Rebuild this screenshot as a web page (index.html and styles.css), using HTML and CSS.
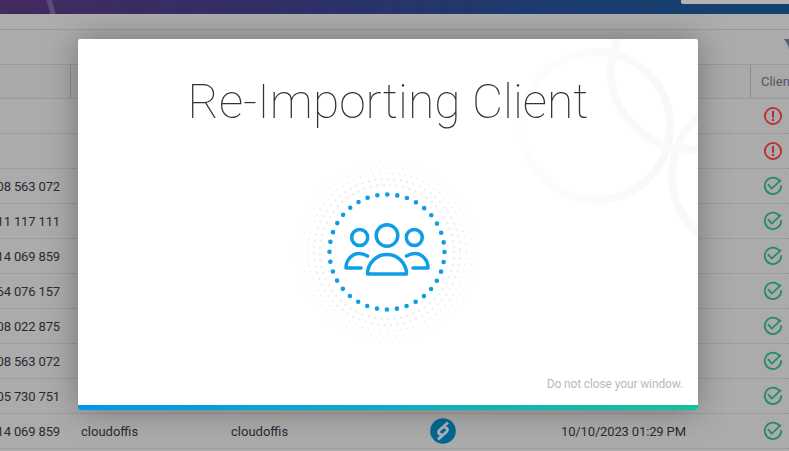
FILE: index.html
```html
<!DOCTYPE html>
<html lang="en">
<head>
<meta charset="utf-8">
<title>Re-Importing Client</title>
<link rel="stylesheet" href="styles.css">
</head>
<body>
<svg class="defs" width="0" height="0" aria-hidden="true">
  <defs>
    <symbol id="warn" viewBox="0 0 20 20">
      <circle cx="10" cy="10" r="8.100" fill="none" stroke="currentColor" stroke-width="1.800"/>
      <path d="M10 5.600v5.400" fill="none" stroke="currentColor" stroke-width="2" stroke-linecap="round"/>
      <circle cx="10" cy="14" r="1.200" fill="currentColor"/>
    </symbol>
    <symbol id="ok" viewBox="0 0 20 20">
      <path d="M16.600 5A8.200 8.200 0 1 0 18.200 10" fill="none" stroke="currentColor" stroke-width="1.800" stroke-linecap="round"/>
      <path d="M5.400 8.600l3.300 4 8.800-8.200" fill="none" stroke="currentColor" stroke-width="1.800" stroke-linecap="round" stroke-linejoin="round"/>
    </symbol>
    <symbol id="logo" viewBox="0 0 26 26">
      <circle cx="13" cy="13" r="12.800" fill="#05678f"/>
      <path d="M18 4.500 9.200 12.400C7.500 14.500 9 17 12 16.200" fill="none" stroke="#aab4b8" stroke-width="2.800"/>
      <path d="M8 21.500 16.800 13.600C18.500 11.500 17 9 14 9.800" fill="none" stroke="#aab4b8" stroke-width="2.800"/>
    </symbol>
    <linearGradient id="fade" x1="0" x2="1" y1="0" y2="0">
      <stop offset="0" stop-color="#fdfdfe"/>
      <stop offset="1" stop-color="#f7f8fb"/>
    </linearGradient>
  </defs>
</svg>

<header class="topbar">
  <span class="swoosh"></span>
  <span class="search"></span>
</header>
<div class="toolbar"></div>
<div class="filterbar">
  <svg class="filter" viewBox="0 0 5 10" width="5" height="10" aria-hidden="true"><path d="M0 0h5V6.500L4 10V6z" fill="#56606c"/></svg>
</div>

<main class="table">
  <div class="row head">
    <div class="cell phone"></div>
    <div class="cell wide"></div>
    <div class="cell status-h">Client</div>
  </div>
  <div class="row">
    <div class="cell phone"></div><div class="cell name"></div><div class="cell name"></div><div class="cell brand"></div><div class="cell date"></div>
    <div class="cell status"><svg class="icon red"><use href="#warn"/></svg></div>
  </div>
  <div class="row">
    <div class="cell phone"></div><div class="cell name"></div><div class="cell name"></div><div class="cell brand"></div><div class="cell date"></div>
    <div class="cell status"><svg class="icon red"><use href="#warn"/></svg></div>
  </div>
  <div class="row">
    <div class="cell phone">08 563 072</div><div class="cell name"></div><div class="cell name"></div><div class="cell brand"></div><div class="cell date"></div>
    <div class="cell status"><svg class="icon green"><use href="#ok"/></svg></div>
  </div>
  <div class="row">
    <div class="cell phone">11 117 111</div><div class="cell name"></div><div class="cell name"></div><div class="cell brand"></div><div class="cell date"></div>
    <div class="cell status"><svg class="icon green"><use href="#ok"/></svg></div>
  </div>
  <div class="row">
    <div class="cell phone">14 069 859</div><div class="cell name"></div><div class="cell name"></div><div class="cell brand"></div><div class="cell date"></div>
    <div class="cell status"><svg class="icon green"><use href="#ok"/></svg></div>
  </div>
  <div class="row">
    <div class="cell phone">64 076 157</div><div class="cell name"></div><div class="cell name"></div><div class="cell brand"></div><div class="cell date"></div>
    <div class="cell status"><svg class="icon green"><use href="#ok"/></svg></div>
  </div>
  <div class="row">
    <div class="cell phone">08 022 875</div><div class="cell name"></div><div class="cell name"></div><div class="cell brand"></div><div class="cell date"></div>
    <div class="cell status"><svg class="icon green"><use href="#ok"/></svg></div>
  </div>
  <div class="row">
    <div class="cell phone">08 563 072</div><div class="cell name"></div><div class="cell name"></div><div class="cell brand"></div><div class="cell date"></div>
    <div class="cell status"><svg class="icon green"><use href="#ok"/></svg></div>
  </div>
  <div class="row">
    <div class="cell phone">05 730 751</div><div class="cell name"></div><div class="cell name"></div><div class="cell brand"><svg class="logo"><use href="#logo"/></svg></div><div class="cell date"></div>
    <div class="cell status"><svg class="icon green"><use href="#ok"/></svg></div>
  </div>
  <div class="row">
    <div class="cell phone">14 069 859</div><div class="cell name">cloudoffis</div><div class="cell name">cloudoffis</div><div class="cell brand"><svg class="logo"><use href="#logo"/></svg></div><div class="cell date">10/10/2023 01:29 PM</div>
    <div class="cell status"><svg class="icon green"><use href="#ok"/></svg></div>
  </div>
</main>

<section class="modal">
  <svg class="rings" viewBox="0 0 620 371" aria-hidden="true">
    <g fill="none" stroke-width="8">
      <circle cx="518" cy="87" r="74" stroke="url(#fade)"/>
      <circle cx="612" cy="31" r="79" stroke="#f8f9fb"/>
      <circle cx="672" cy="136" r="78" stroke="#f8f9fb"/>
    </g>
  </svg>
  <h1 class="title">Re-Importing Client</h1>
  <div class="progress">
    <svg class="spinner" viewBox="0 0 200 200" width="200" height="200" aria-hidden="true">
      <g class="halftone" fill="none" stroke-linecap="round">
        <circle cx="100" cy="100" r="91" stroke-width="1" stroke-dasharray="0 6.500"/>
        <circle cx="100" cy="100" r="85" stroke-width="1.500" stroke-dasharray="0 6.500"/>
        <circle cx="100" cy="100" r="79" stroke-width="2" stroke-dasharray="0 6.500"/>
        <circle cx="100" cy="100" r="73" stroke-width="2.600" stroke-dasharray="0 6.500"/>
        <circle cx="100" cy="100" r="67" stroke-width="2.800" stroke-dasharray="0 6.500"/>
      </g>
      <circle class="dots" cx="100" cy="100" r="57.500" stroke-dasharray="0 10.030"/>
      <g class="people">
        <circle cx="100" cy="83.500" r="10.800"/>
        <circle cx="72.700" cy="85.500" r="8"/>
        <circle cx="127.300" cy="85.500" r="8"/>
        <path d="M80.500 122a19.500 19.500 0 0 1 39 0z"/>
        <path d="M74 116H59C59 107 66 101.500 72 101.500C75 101.500 78 102.500 80.500 104"/>
        <path d="M126 116H141C141 107 134 101.500 128 101.500C125 101.500 122 102.500 119.500 104"/>
      </g>
    </svg>
  </div>
  <p class="note">Do not close your window.</p>
  <div class="bar"></div>
</section>
</body>
</html>
```
FILE: styles.css
```css
* { box-sizing: border-box; }

html, body {
  margin: 0;
  height: 100%;
  overflow: hidden;
}

body {
  position: relative;
  background: #ababab;
  font-family: Roboto, "Liberation Sans", sans-serif;
  font-size: 13px;
  color: #2a2a32;
}

.defs { position: absolute; }

.topbar {
  position: relative;
  height: 14px;
  background: linear-gradient(90deg, #432a60 0%, #323068 35%, #1e3a6e 65%, #12436f 100%);
  overflow: hidden;
}

.swoosh {
  position: absolute;
  left: 46px;
  top: -2px;
  width: 10px;
  height: 18px;
  background: #5d4b7c;
  clip-path: polygon(0 0, 55% 0, 100% 100%, 50% 100%);
}

.search {
  position: absolute;
  right: 0;
  top: 0;
  width: 108px;
  height: 4px;
  background: #b4b4b4;
  border-radius: 0 0 0 2px;
}

.toolbar {
  height: 16px;
  border-bottom: 1px solid #999;
  background: #adadad;
}

.filterbar {
  height: 35px;
  display: flex;
  justify-content: flex-end;
  padding-top: 9px;
  border-bottom: 1px solid #999;
}

.table { display: flex; flex-direction: column; }

.row {
  display: grid;
  grid-template-columns: 71px 150px 149px 146px 234px 1fr;
  height: 35px;
  border-bottom: 1px dotted #8f8f8f;
}

.head {
  grid-template-columns: 71px 680px 1fr;
  height: 34px;
  border-bottom: 1px solid #999;
  background: #a9a9a9;
}

.cell {
  display: flex;
  align-items: center;
  min-width: 0;
  white-space: nowrap;
}

.head .phone, .head .wide {
  border-right: 1px solid #8a8a8a;
}

.status-h {
  padding-left: 10px;
  color: #4f5763;
}

.phone {
  justify-content: flex-end;
  padding-right: 11px;
  letter-spacing: -.14px;
}

.name { padding-left: 10px; }

.brand { justify-content: center; }

.date {
  padding-left: 45px;
  letter-spacing: -.14px;
}

.status { justify-content: center; padding-left: 6px; }

.icon { width: 20px; height: 20px; flex: none; }
.red { color: #bd2c2c; }
.green { color: #268a6c; }

.logo { width: 26px; height: 26px; flex: none; }

.modal {
  position: absolute;
  left: 78px;
  top: 39px;
  width: 620px;
  height: 371px;
  display: flex;
  flex-direction: column;
  background: #fff;
  border-radius: 2px;
  box-shadow: 0 0 32px rgba(0, 0, 0, .32);
  overflow: hidden;
}

.rings {
  position: absolute;
  left: 0;
  top: 0;
  width: 620px;
  height: 371px;
}

.title {
  position: relative;
  margin: 31px 0 0;
  font-size: 48px;
  line-height: 64px;
  font-weight: 100;
  text-align: center;
  color: #333;
  will-change: transform;
}

.progress {
  position: relative;
  display: flex;
  justify-content: center;
  margin-top: 18px;
  padding-right: 2px;
}

.halftone circle { stroke: #eef1f4; }

.dots {
  fill: none;
  stroke: #0f9de6;
  stroke-width: 4.600;
  stroke-linecap: round;
}

.people {
  fill: none;
  stroke: #0f9de6;
  stroke-width: 3.500;
  stroke-linecap: round;
  stroke-linejoin: round;
}

.note {
  position: relative;
  margin: auto 15px 0 0;
  padding-bottom: 14px;
  text-align: right;
  font-size: 12px;
  line-height: 14px;
  letter-spacing: -.12px;
  color: #b7bac0;
}

.bar {
  position: relative;
  flex: none;
  height: 5px;
  background: linear-gradient(90deg, #0098e9, #14c39b);
}
```
